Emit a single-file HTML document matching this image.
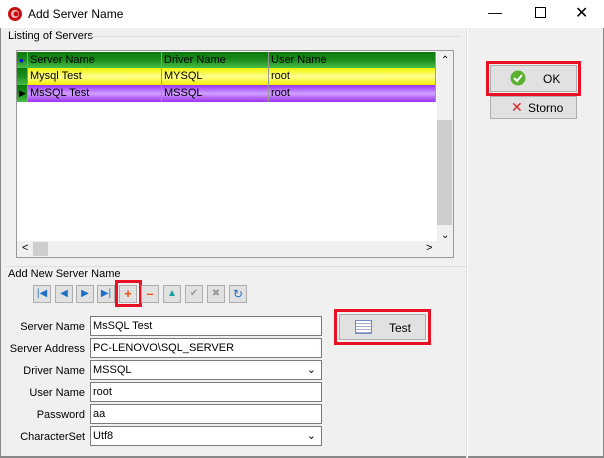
<!DOCTYPE html>
<html><head><style>
body{margin:0;width:604px;height:458px;background:#f0f0f0;font-family:"Liberation Sans",Arial,sans-serif;font-size:11px;color:#000;position:relative;overflow:hidden}
.a{position:absolute}
.title{left:0;top:0;width:604px;height:28px;background:#fff}
.hdr{background:linear-gradient(#0a7a0a,#1c8c1c 50%,#48c048);color:#000}
.cell{position:absolute;height:16px;line-height:16px;padding-left:2px;box-sizing:border-box;border-right:1px solid #999;white-space:nowrap}
.y{background:linear-gradient(#f0f000,#ffff90 50%,#f0f000)}
.p{background:linear-gradient(#9a30f0,#d0a0ff 50%,#9a30f0)}
.nb{position:absolute;top:285px;width:18px;height:18px;background:#e1e1e1;border:1px solid #adadad;box-sizing:border-box;text-align:center;line-height:16px;font-size:10px}
.lbl{position:absolute;right:519px;text-align:right;width:90px}
.inp{position:absolute;left:90px;width:232px;height:20px;background:#fff;border:1px solid #7a7a7a;box-sizing:border-box;padding-left:2px;line-height:18px;font-size:11px}
.btn{position:absolute;background:#e1e1e1;border:1px solid #adadad;box-sizing:border-box}
.red{position:absolute;border:3px solid #e81123;box-sizing:border-box}
</style></head><body>
<div class="a title"></div>
<svg class="a" style="left:7px;top:6px" width="16" height="16"><circle cx="8" cy="8" r="7" fill="#c81010"/><circle cx="8" cy="8" r="4" fill="#f3c0c0"/><circle cx="9" cy="8" r="2.5" fill="#c81010"/></svg>
<div class="a" style="left:28px;top:7px;font-size:12px">Add Server Name</div>
<div class="a" style="left:488px;top:4px;font-size:14px">&#8212;</div>
<div class="a" style="left:535px;top:7px;width:9px;height:9px;border:1px solid #000"></div>
<div class="a" style="left:575px;top:3px;font-size:16px">&#10005;</div>
<div class="a" style="left:0;top:28px;width:1px;height:430px;background:#888"></div>
<div class="a" style="left:603px;top:28px;width:1px;height:430px;background:#888"></div>
<div class="a" style="left:0;top:456px;width:604px;height:2px;background:#888"></div>
<div class="a" style="left:467px;top:28px;width:1px;height:430px;background:#fff"></div>
<div class="a" style="left:466px;top:28px;width:1px;height:430px;background:#ddd"></div>
<div class="a" style="left:8px;top:30px">Listing of Servers</div>
<div class="a" style="left:88px;top:36px;width:372px;height:1px;background:#ddd"></div>
<div class="a" style="left:16px;top:50px;width:438px;height:208px;background:#fff;border:1px solid #999;box-sizing:border-box"></div>
<div class="a" style="left:17px;top:52px;width:420px;height:50px">
<div class="cell hdr" style="left:0;top:0;width:11px"><span style="color:#00f;font-size:8px">&#9679;</span></div>
<div class="cell hdr" style="left:11px;top:0;width:134px">Server Name</div>
<div class="cell hdr" style="left:145px;top:0;width:107px">Driver Name</div>
<div class="cell hdr" style="left:252px;top:0;width:167px">User Name</div>
<div class="cell hdr" style="left:0;top:16px;width:11px;height:17px"></div>
<div class="cell y" style="left:11px;top:16px;width:134px;height:17px">Mysql Test</div>
<div class="cell y" style="left:145px;top:16px;width:107px;height:17px">MYSQL</div>
<div class="cell y" style="left:252px;top:16px;width:167px;height:17px">root</div>
<div class="cell hdr" style="left:0;top:33px;width:11px;height:17px;font-size:9px">&#9654;</div>
<div class="cell p" style="left:11px;top:33px;width:134px;height:17px">MsSQL Test</div>
<div class="cell p" style="left:145px;top:33px;width:107px;height:17px">MSSQL</div>
<div class="cell p" style="left:252px;top:33px;width:167px;height:17px">root</div>
</div>
<div class="a" style="left:437px;top:51px;width:16px;height:206px;background:#f0f0f0"></div>
<div class="a" style="left:441px;top:55px;font-size:10px">&#8963;</div>
<div class="a" style="left:437px;top:120px;width:15px;height:105px;background:#cdcdcd"></div>
<div class="a" style="left:441px;top:230px;font-size:10px">&#8964;</div>
<div class="a" style="left:17px;top:241px;width:420px;height:16px;background:#f0f0f0"></div>
<div class="a" style="left:22px;top:242px;font-size:11px">&lt;</div>
<div class="a" style="left:33px;top:242px;width:15px;height:14px;background:#cdcdcd"></div>
<div class="a" style="left:426px;top:242px;font-size:11px">&gt;</div>
<div class="a" style="left:6px;top:266px;width:460px;height:1px;background:#ddd"></div>
<div class="a" style="left:8px;top:268px">Add New Server Name</div>
<div class="nb" style="left:33px;color:#1e6fc8">|&#9664;</div>
<div class="nb" style="left:55px;color:#1e6fc8">&#9664;</div>
<div class="nb" style="left:76px;color:#1e6fc8">&#9654;</div>
<div class="nb" style="left:97px;color:#1e6fc8">&#9654;|</div>
<div class="nb" style="left:119px;color:#f05010;font-weight:bold;font-size:13px">+</div>
<div class="red" style="left:115px;top:280px;width:27px;height:27px"></div>
<div class="nb" style="left:141px;color:#f05010;font-weight:bold;font-size:13px">&#8211;</div>
<div class="nb" style="left:163px;color:#1aa0a0">&#9650;</div>
<div class="nb" style="left:185px;color:#999">&#10004;</div>
<div class="nb" style="left:207px;color:#999">&#10006;</div>
<div class="nb" style="left:229px;color:#1e6fc8;font-size:12px">&#8635;</div>
<div class="lbl" style="top:321px">Server Name</div><div class="inp" style="top:316px">MsSQL Test</div>
<div class="lbl" style="top:343px">Server Address</div><div class="inp" style="top:338px">PC-LENOVO\SQL_SERVER</div>
<div class="lbl" style="top:365px">Driver Name</div><div class="inp" style="top:360px">MSSQL<span style="position:absolute;right:5px;top:0">&#8964;</span></div>
<div class="lbl" style="top:387px">User Name</div><div class="inp" style="top:382px">root</div>
<div class="lbl" style="top:409px">Password</div><div class="inp" style="top:404px">aa</div>
<div class="lbl" style="top:431px">CharacterSet</div><div class="inp" style="top:426px">Utf8<span style="position:absolute;right:5px;top:0">&#8964;</span></div>
<div class="btn" style="left:339px;top:314px;width:87px;height:26px"></div>
<div class="a" style="left:355px;top:320px;width:15px;height:12px;border:1px solid #6a8ac8;background:repeating-linear-gradient(#fff 0 2px,#aac 2px 3px)"></div>
<div class="a" style="left:389px;top:321px;font-size:12px">Test</div>
<div class="red" style="left:334px;top:309px;width:97px;height:36px"></div>
<div class="btn" style="left:490px;top:65px;width:87px;height:27px"></div>
<svg class="a" style="left:510px;top:70px" width="16" height="16"><circle cx="8" cy="8" r="7.5" fill="#5cb030"/><path d="M4 8l3 3 5-6" stroke="#fff" stroke-width="2" fill="none"/></svg>
<div class="a" style="left:543px;top:72px;font-size:12px">OK</div>
<div class="red" style="left:486px;top:61px;width:95px;height:35px"></div>
<div class="btn" style="left:490px;top:96px;width:87px;height:23px"></div>
<div class="a" style="left:511px;top:99px;color:#e02020;font-size:14px">&#10005;</div>
<div class="a" style="left:528px;top:101px;font-size:12px">Storno</div>
</body></html>
